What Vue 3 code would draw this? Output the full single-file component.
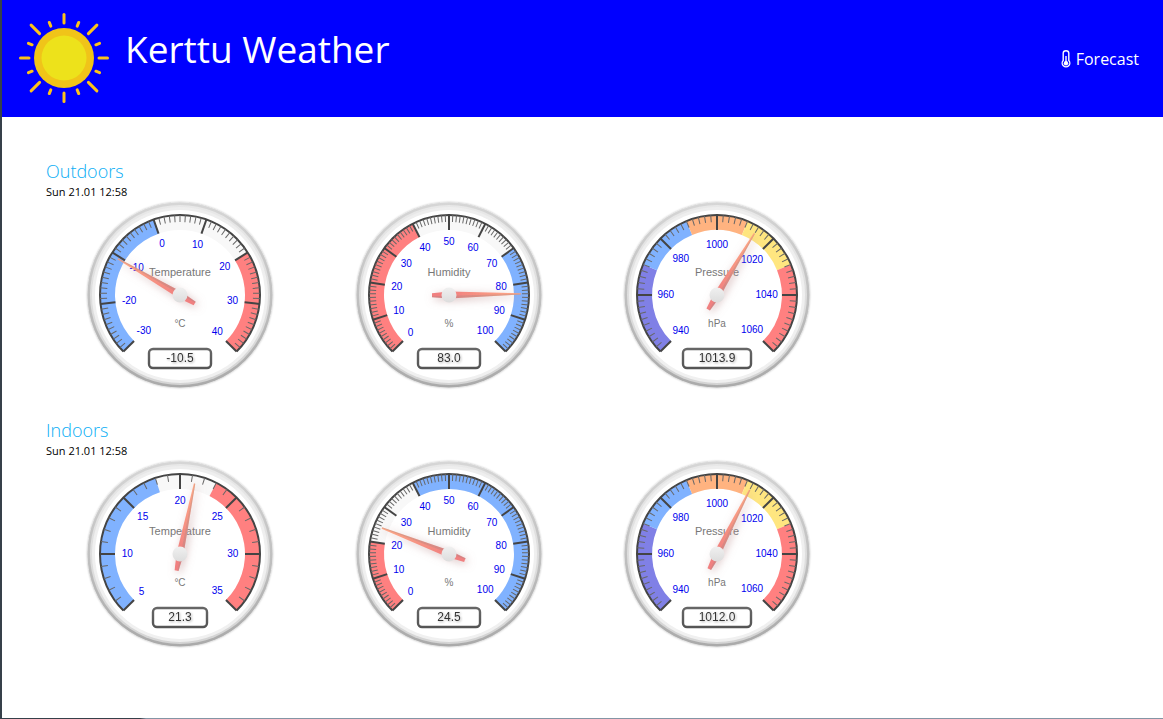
<script setup>
const BLUE = '#80b2ff'
const RED = '#ff8080'
const PURPLE = '#8080e6'
const ORANGE = '#ffb380'
const YELLOW = '#ffe680'

const pressureBands = [
  [940, 970, PURPLE],
  [970, 990, BLUE],
  [990, 1010, ORANGE],
  [1010, 1030, YELLOW],
  [1030, 1060, RED],
]

const rooms = [
  {
    name: 'Outdoors',
    time: 'Sun 21.01 12:58',
    gauges: [
      { title: 'Temperature', unit: '°C', min: -30, max: 40, step: 10, minor: 10, value: -10.5, box: 62, bands: [[-30, 0, BLUE], [20, 40, RED]] },
      { title: 'Humidity', unit: '%', min: 0, max: 100, step: 10, minor: 10, value: 83, box: 62, bands: [[0, 40, RED], [70, 100, BLUE]] },
      { title: 'Pressure', unit: 'hPa', min: 940, max: 1060, step: 20, minor: 10, value: 1013.9, box: 68, bands: pressureBands },
    ],
  },
  {
    name: 'Indoors',
    time: 'Sun 21.01 12:58',
    gauges: [
      { title: 'Temperature', unit: '°C', min: 5, max: 35, step: 5, minor: 5, value: 21.3, box: 54, bands: [[5, 18, BLUE], [23, 35, RED]] },
      { title: 'Humidity', unit: '%', min: 0, max: 100, step: 10, minor: 10, value: 24.5, box: 62, bands: [[0, 20, RED], [40, 100, BLUE]] },
      { title: 'Pressure', unit: 'hPa', min: 940, max: 1060, step: 20, minor: 10, value: 1012, box: 68, bands: pressureBands },
    ],
  },
]

const angle = (g, v) => -135 + ((v - g.min) / (g.max - g.min)) * 270

function point(deg, r) {
  const a = (deg * Math.PI) / 180
  return [100 + r * Math.sin(a), 100 - r * Math.cos(a)]
}

function arc(from, to, outer, inner) {
  const big = to - from > 180 ? 1 : 0
  const [a, b, c, d] = [point(from, outer), point(to, outer), point(to, inner), point(from, inner)]
  return `M${a} A${outer} ${outer} 0 ${big} 1 ${b} L${c} A${inner} ${inner} 0 ${big} 0 ${d} Z`
}

const [rimStart, rimEnd] = [point(-135, 80), point(135, 80)]
const rim = `M${rimStart} A80 80 0 1 1 ${rimEnd}`

function majors(g) {
  const out = []
  for (let v = g.min; v <= g.max; v += g.step) {
    const text = String(v)
    const deg = angle(g, v)
    const [x, y] = point(deg, 56 - 1.6 * text.length)
    out.push({ text, deg, x, y: y + 3 })
  }
  return out
}

function minors(g) {
  const count = ((g.max - g.min) / g.step) * g.minor
  return Array.from({ length: count }, (_, i) => i)
    .filter((i) => i % g.minor)
    .map((i) => -135 + (i / count) * 270)
}

const sunLong = [0, 90, 180, 270]
const sunDiagonal = [45, 135, 225, 315]
const sunShort = [22.5, 67.5, 112.5, 157.5, 202.5, 247.5, 292.5, 337.5]
</script>

<template>
  <div class="frame">
    <svg class="shared" width="0" height="0" aria-hidden="true">
      <defs>
        <linearGradient id="ring1" x1="0" y1="0" x2="0" y2="1"><stop offset="0" stop-color="#d6d6d6" /><stop offset="1" stop-color="#aaa" /></linearGradient>
        <linearGradient id="ring2" x1="0" y1="0" x2="0" y2="1"><stop offset="0" stop-color="#e8e8e8" /><stop offset="1" stop-color="#d4d4d4" /></linearGradient>
        <linearGradient id="ring3" x1="0" y1="0" x2="0" y2="1"><stop offset="0" stop-color="#eee" /><stop offset="1" stop-color="#f0f0f0" /></linearGradient>
        <linearGradient id="boxline" x1="0" y1="0" x2="0" y2="1"><stop offset="0" stop-color="#666" /><stop offset="1" stop-color="#555" /></linearGradient>
        <linearGradient id="hub" x1="0" y1="0" x2="0" y2="1"><stop offset="0" stop-color="#f0f0f0" /><stop offset="1" stop-color="#ddd" /></linearGradient>
        <linearGradient id="needle" gradientUnits="userSpaceOnUse" x1="0" y1="0" x2="0" y2="-72"><stop offset="0" stop-color="#f08080" /><stop offset="1" stop-color="#ffa07a" stop-opacity=".9" /></linearGradient>
        <filter id="rimShadow" x="-10%" y="-10%" width="120%" height="120%"><feDropShadow dx="0" dy="0" stdDeviation="1" flood-color="#000" flood-opacity=".35" /></filter>
        <filter id="needleShadow" filterUnits="userSpaceOnUse" x="-100" y="-100" width="200" height="200"><feDropShadow dx="2" dy="2" stdDeviation="4" flood-color="#bc8f8f" flood-opacity=".6" /></filter>
        <filter id="textShadow" x="-20%" y="-30%" width="150%" height="180%"><feDropShadow dx="1" dy="1" stdDeviation="1" flood-color="#000" flood-opacity=".3" /></filter>
      </defs>
    </svg>
    <div class="page">
      <header class="bar">
        <svg class="sun" viewBox="-48 -48 96 96" aria-hidden="true">
          <g stroke="#fcc21b" stroke-width="3" stroke-linecap="round">
            <line v-for="d in sunLong" :key="d" y1="-35" y2="-43.500" :transform="`rotate(${d})`" />
            <line v-for="d in sunDiagonal" :key="d" y1="-34.500" y2="-46.500" :transform="`rotate(${d})`" />
            <line v-for="d in sunShort" :key="d" y1="-34.500" y2="-38.500" :transform="`rotate(${d})`" />
          </g>
          <circle r="30" fill="#f0c419" />
          <circle r="22.500" fill="#ede21b" />
        </svg>
        <h1>Kerttu Weather</h1>
        <a class="forecast" href="#forecast">
          <svg class="thermo" viewBox="0 0 10 18" aria-hidden="true">
            <path d="M2.200 10.500V3.300a2.800 2.600 0 0 1 5.600 0v7.200a3.800 3.800 0 1 1-5.600 0z" fill="none" stroke="#fff" stroke-width="1.400" />
            <path d="M5 6v7" stroke="#fff" stroke-width="1.400" />
            <circle cx="5" cy="13.300" r="2.200" fill="#fff" />
          </svg>
          <span>Forecast</span>
        </a>
      </header>

      <main>
        <section v-for="room in rooms" :key="room.name">
          <h2>{{ room.name }}</h2>
          <p class="time">{{ room.time }}</p>
          <div class="gauges">
            <svg v-for="g in room.gauges" :key="g.title" class="gauge" viewBox="0 0 200 200" role="img" :aria-label="g.title">
              <circle cx="100" cy="100" r="92.500" fill="url(#ring1)" filter="url(#rimShadow)" />
              <circle cx="100" cy="100" r="90" fill="url(#ring2)" />
              <circle cx="100" cy="100" r="88" fill="url(#ring3)" />
              <circle cx="100" cy="100" r="85" fill="#fff" />
              <path :d="arc(-135, 135, 80, 65)" fill="#f8f8f8" />
              <path v-for="b in g.bands" :key="b[0]" :d="arc(angle(g, b[0]), angle(g, b[1]), 80, 65)" :fill="b[2]" />
              <path :d="rim" fill="none" stroke="#444" stroke-width="2" />
              <line v-for="d in minors(g)" :key="d" x1="100" x2="100" y1="20" y2="27" stroke="#666" stroke-width="1" :transform="`rotate(${d} 100 100)`" />
              <g v-for="m in majors(g)" :key="m.text">
                <line x1="100" x2="100" y1="20" y2="35" stroke="#444" stroke-width="2" :transform="`rotate(${m.deg} 100 100)`" />
                <text class="num" :x="m.x" :y="m.y">{{ m.text }}</text>
              </g>
              <text class="title" x="100" y="81">{{ g.title }}</text>
              <text class="unit" x="100" y="132">{{ g.unit }}</text>

              <rect :x="100 - g.box / 2" y="154" :width="g.box" height="19" rx="4" fill="#fff" stroke="url(#boxline)" stroke-width="2.400" />
              <text class="value" x="100" y="167" filter="url(#textShadow)">{{ g.value.toFixed(1) }}</text>

              <g transform="translate(100 100)">
                <g filter="url(#needleShadow)">
                  <g :transform="`rotate(${angle(g, g.value)})`">
                    <path d="M-2 17 L-3.500 0 L-.7 -72 L.7 -72 L3.500 0 L2 17 Z" fill="url(#needle)" />
                    <path d="M2 17 L3.500 0 L.7 -72 L0 -72 L1 17 Z" fill="#888" fill-opacity=".25" />
                  </g>
                </g>
                <circle r="7.500" fill="url(#hub)" />
              </g>
            </svg>
          </div>
        </section>
      </main>
    </div>
  </div>
</template>

<style>
body {
  margin: 0;
}
</style>

<style scoped>
.frame {
  box-sizing: border-box;
  min-height: 100vh;
  display: flex;
  padding: 0 0 1px 2px;
  background: linear-gradient(90deg, #36404a 140px, #8495a5 146px);
  font-family: "Segoe UI", "Open Sans", "Noto Sans", sans-serif;
}
.shared {
  position: absolute;
}
.page {
  flex: 1;
  background: #fff;
}
.bar {
  display: flex;
  align-items: center;
  box-sizing: border-box;
  min-height: 117px;
  padding: 0 24px 2px 14px;
  background: #00f;
  color: #fff;
}
.sun {
  width: 96px;
  height: 96px;
}
h1 {
  flex: 1;
  margin: 0 0 18px 13px;
  font-size: 37px;
  line-height: 52px;
  font-weight: 400;
}
.forecast {
  display: flex;
  align-items: center;
  gap: 5px;
  margin-top: 2px;
  color: #fff;
  font-size: 16px;
  line-height: 24px;
  text-decoration: none;
}
.thermo {
  width: 10px;
  height: 18px;
}
main {
  padding: 42px 43px 24px 44px;
}
h2 {
  margin: 0;
  color: #0aaef5;
  font-size: 18px;
  line-height: 24px;
  font-weight: 300;
}
.time {
  margin: 1px 0 0;
  color: #000;
  font-size: 11px;
  line-height: 16px;
}
.gauges {
  display: grid;
  grid-template-columns: repeat(4, 1fr);
  justify-items: center;
  margin-top: -5px;
}
section + section {
  margin-top: 23px;
}
.gauge {
  display: block;
  width: 200px;
  height: 200px;
}
text {
  font-family: "Liberation Sans", Arial, sans-serif;
  text-anchor: middle;
}
.num {
  font-size: 10px;
  fill: #00e;
}
.title {
  font-size: 11px;
  fill: #777;
}
.unit {
  font-size: 10px;
  fill: #777;
}
.value {
  font-size: 12px;
  fill: #333;
}
</style>
